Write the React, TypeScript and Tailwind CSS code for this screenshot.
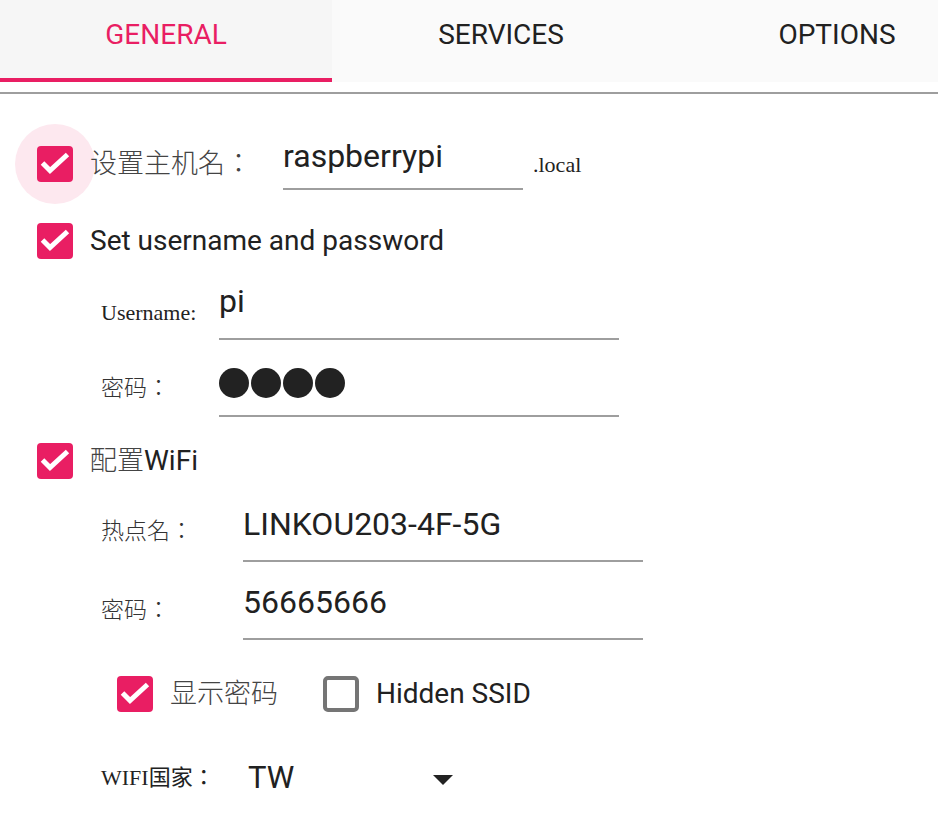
import React from 'react';

const serif = { fontFamily: '"Liberation Serif", "Noto Sans CJK TC", serif' };

const CheckBox: React.FC<{ on: boolean }> = ({ on }) =>
    on ? (
        <div className="relative w-[36px] h-[36px] shrink-0 rounded-[4px] bg-[#e91e63]">
            <svg viewBox="0 0 36 36" className="w-[36px] h-[36px]">
                <path d="M5.5 17 L13 24.5 L30.5 8.5" fill="none" stroke="#fff" strokeWidth="5" />
            </svg>
        </div>
    ) : (
        <div className="w-[36px] h-[36px] shrink-0 rounded-[5px] border-[4px] border-[#757575] bg-white" />
    );

const Tab: React.FC<{ label: string; active?: boolean; width: string; bg: string }> = ({ label, active, width, bg }) => (
    <div className={`flex flex-col shrink-0 h-[82px] ${width} ${bg}`}>
        <div className={`pt-[19px] text-center text-[28px] leading-[32px] ${active ? 'text-[#e91e63]' : 'text-[#212121]'}`}>
            {label}
        </div>
        <div className={`mt-auto h-[4px] ${active ? 'bg-[#e91e63]' : ''}`} />
    </div>
);

export default function App() {
    return (
        <div className="w-[938px] h-[824px] overflow-hidden bg-white text-[#212121]" style={{ fontFamily: 'Roboto, "Noto Sans CJK TC", sans-serif' }}>
            <div className="flex overflow-hidden">
                <Tab label="GENERAL" active width="w-[332px]" bg="bg-[#f6f6f6]" />
                <Tab label="SERVICES" width="w-[338px]" bg="bg-[#fafafa]" />
                <Tab label="OPTIONS" width="w-[334px]" bg="bg-[#fafafa]" />
            </div>
            <div className="mt-[10px] h-[2px] bg-[#9e9e9e]" />

            <div className="pl-[37px] pt-[30px]">
                {/* hostname */}
                <div className="relative flex items-center h-[80px]">
                    <div className="absolute -left-[22px] top-0 w-[80px] h-[80px] rounded-full bg-[#fde8ef]" />
                    <CheckBox on />
                    <span className="relative ml-[17px] w-[193px] text-[27px] leading-[30px] font-light text-[#444]" style={serif}>
                        设置主机名：
                    </span>
                    <div className="w-[240px] h-[52px] pt-[3px] border-b-2 border-[#9e9e9e] text-[32px] leading-[30px]">raspberrypi</div>
                    <span className="ml-[10px] mt-[2px] text-[22px] leading-[22px] text-[#222]" style={serif}>
                        .local
                    </span>
                </div>

                {/* user */}
                <div className="flex items-center h-[74px]">
                    <CheckBox on />
                    <span className="ml-[17px] text-[28px] leading-[30px]">Set username and password</span>
                </div>
                <div className="flex items-start h-[62px] pl-[64px]">
                    <span className="w-[118px] pt-[24px] text-[22px] leading-[22px] text-[#222]" style={serif}>
                        Username:
                    </span>
                    <div className="w-[400px] h-[62px] pt-[8px] border-b-2 border-[#9e9e9e] text-[32px] leading-[30px]">pi</div>
                </div>
                <div className="flex items-start h-[77px] pl-[64px]">
                    <span className="w-[118px] pt-[38px] text-[23px] leading-[22px] font-light text-[#333]" style={serif}>
                        密码：
                    </span>
                    <div className="w-[400px] h-[77px] pt-[28px] border-b-2 border-[#9e9e9e] flex gap-[2px]">
                        {[0, 1, 2, 3].map((i) => (
                            <div key={i} className="w-[30px] h-[30px] rounded-full bg-[#222]" />
                        ))}
                    </div>
                </div>

                {/* wifi */}
                <div className="flex items-center h-[88px]">
                    <CheckBox on />
                    <span className="ml-[17px] text-[28px] leading-[30px]">
                        <span className="text-[27px] font-light text-[#444]" style={serif}>配置</span>WiFi
                    </span>
                </div>
                <div className="flex items-start h-[57px] pl-[64px]">
                    <span className="w-[142px] pt-[16px] text-[23px] leading-[22px] font-light text-[#333]" style={serif}>
                        热点名：
                    </span>
                    <div className="w-[400px] h-[57px] pt-[4px] border-b-2 border-[#9e9e9e] text-[32px] leading-[30px]">LINKOU203-4F-5G</div>
                </div>
                <div className="flex items-start h-[78px] pl-[64px]">
                    <span className="w-[142px] pt-[38px] text-[23px] leading-[22px] font-light text-[#333]" style={serif}>
                        密码：
                    </span>
                    <div className="w-[400px] h-[78px] pt-[25px] border-b-2 border-[#9e9e9e] text-[32px] leading-[30px]">56665666</div>
                </div>

                <div className="flex items-center h-[36px] mt-[36px] pl-[80px]">
                    <CheckBox on />
                    <span className="ml-[17px] w-[153px] text-[27px] leading-[30px] font-light text-[#444]" style={serif}>
                        显示密码
                    </span>
                    <CheckBox on={false} />
                    <span className="ml-[17px] text-[28px] leading-[30px]">Hidden SSID</span>
                </div>

                <div className="flex items-center h-[40px] mt-[46px] pl-[64px]">
                    <span className="w-[147px] text-[22px] leading-[22px] text-[#222]" style={serif}>
                        WIFI国家：
                    </span>
                    <span className="w-[185px] text-[31px] leading-[32px]">TW</span>
                    <svg viewBox="0 0 20 10" className="w-[20px] h-[10px] mt-[3px]">
                        <path d="M0 0 H20 L10 10 Z" fill="#222" />
                    </svg>
                </div>
            </div>
        </div>
    );
}
